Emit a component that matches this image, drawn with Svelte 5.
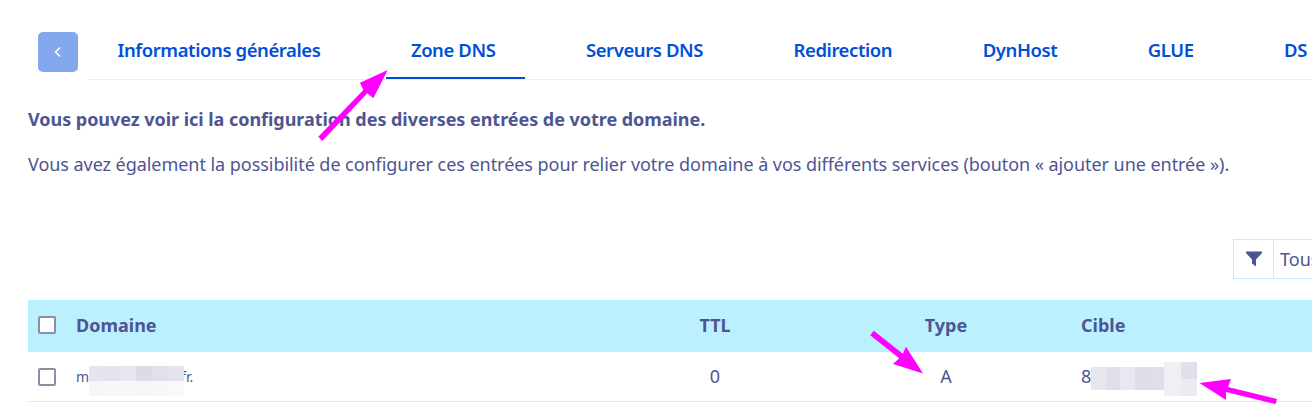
<script>
  const tabs = ['Informations générales', 'Zone DNS', 'Serveurs DNS', 'Redirection', 'DynHost', 'GLUE', 'DS'];
  const top1 = ['#e6e5ef', '#e3e2ed', '#e7e6f0', '#dcdce8', '#e1e0eb', '#e5e4ee'];
  const bottom1 = ['#f6f6f9', '#f8f8fb', '#f8f8fb', '#f6f6f9', '#f8f8fb', '#f9f9fb'];
  const cells2 = ['#e7e6ef', '#dfdfe9', '#e9e8f0', '#dedde8', '#e0dfe9'];
</script>

<main class="page">
  <header class="bar">
    <button class="back" aria-label="Retour">
      <svg width="10" height="12" viewBox="0 0 10 12"><path d="M7 1.500 2.600 6 7 10.500" fill="none" stroke="#fff" stroke-width="1.600"/></svg>
    </button>
    <ul class="tabs">
      {#each tabs as t, i}
        <li class="tab" class:active={i === 1}>{t}</li>
      {/each}
    </ul>
  </header>

  <section class="intro">
    <p class="lead">Vous pouvez voir ici la configuration des diverses entrées de votre domaine.</p>
    <p class="desc">Vous avez également la possibilité de configurer ces entrées pour relier votre domaine à vos différents services (bouton « ajouter une entrée »).</p>
  </section>

  <div class="filter">
    <span class="funnel">
      <svg width="16" height="16" viewBox="0 0 16 16"><path d="M0 .5H16V2L10 8.500V15.500L6 12.500V8.500L0 2z" fill="#4d5592"/></svg>
    </span>
    <span class="select">Tous</span>
  </div>

  <div class="table">
    <div class="row head">
      <span class="c-check"><i class="box"></i></span>
      <span class="c-domain">Domaine</span>
      <span class="c-ttl">TTL</span>
      <span class="c-type">Type</span>
      <span class="c-target">Cible</span>
    </div>
    <div class="row">
      <span class="c-check"><i class="box"></i></span>
      <span class="c-domain small">m<i class="gap"></i>fr.</span>
      <span class="c-ttl lift">0</span>
      <span class="c-type lift">A</span>
      <span class="c-target lift">8</span>
    </div>
  </div>

  <div class="redact r1">
    {#each top1 as c}<i style="background:{c}"></i>{/each}
    {#each bottom1 as c}<i style="background:{c}"></i>{/each}
  </div>
  <div class="redact r2">
    {#each cells2 as c}<i style="background:{c}"></i>{/each}
  </div>
  <div class="redact r3"><i></i><i></i><i></i></div>

  <svg class="arrows" width="1312" height="418" viewBox="0 0 1312 418" fill="#f0f">
    <path d="M318.300 136.700 363.300 90 360 82.700 387.700 70 373.300 98.300 367.300 93.300 322.300 141z"/>
    <path d="M873.800 330.800 902.800 353.800 906 346.700 923 373.500 893 364 899.200 358.200 870.200 335.200z"/>
    <path d="M1277 399 1275.500 404 1226 392 1226 400 1199.500 383 1231 379 1228 387z"/>
  </svg>
</main>

<style>
  :global(body) { margin: 0; background: #fff; }
  .page {
    position: relative;
    width: 1312px;
    height: 418px;
    overflow: hidden;
    padding: 32px 0 0 28px;
    box-sizing: border-box;
    font-family: "Noto Sans", sans-serif;
    color: #4d5592;
  }
  p { margin: 0; }
  .bar { display: flex; align-items: flex-start; padding-left: 10px; height: 48px; }
  .back {
    width: 40px; height: 40px; padding: 0; border: 0; border-radius: 5px;
    background: #84a8ed; display: flex; align-items: center; justify-content: center; flex: none;
  }
  .tabs {
    display: flex; list-style: none; margin: 0 0 0 10px; padding: 0 0 0 4.500px;
    border-bottom: 1px solid #e6eff7; flex: 1; height: 47px; box-sizing: content-box; white-space: nowrap;
  }
  .tab {
    box-sizing: border-box; height: 47px; padding: 5px 30px 0 25px; margin-right: 35.500px;
    font-size: 18.500px; font-weight: 600; line-height: 26px; color: #0050d7; letter-spacing: -0.420px;
  }
  .active { border-bottom: 2px solid #0050d7; height: 47px; }
  .intro { padding-top: 27px; }
  .lead { font-size: 18px; font-weight: 700; line-height: 24px; letter-spacing: -0.040px; white-space: nowrap; }
  .desc { margin-top: 21px; font-size: 18px; line-height: 24px; letter-spacing: -0.050px; white-space: nowrap; }
  .filter { display: flex; justify-content: flex-end; height: 40px; margin-top: 63px; box-sizing: border-box; }
  .funnel {
    box-sizing: border-box; width: 41px; height: 40px; border: 1px solid #bef1ff; display: flex;
    align-items: center; justify-content: center; margin-left: auto;
  }
  .select {
    box-sizing: border-box; width: 38px; height: 40px; padding-left: 6px; border: solid #bef1ff; border-width: 1px 0;
    font-size: 18px; line-height: 38px; overflow: hidden; white-space: nowrap;
  }
  .table { margin-top: 21px; }
  .row {
    display: grid; grid-template-columns: 48px 543px 192px 270px 1fr; align-items: center; height: 50px;
    border-bottom: 1px solid #d3eef6; font-size: 18px; box-sizing: border-box;
  }
  .head { height: 52px; padding-bottom: 2px; background: #bbf0ff; border: 0; font-weight: 700; }
  .lift { margin-bottom: 2px; }
  .box {
    display: block; width: 18px; height: 18px; box-sizing: border-box; margin-left: 10px;
    border: 2px solid #8d8da8; border-radius: 2px; background: #fff;
  }
  .c-ttl, .c-type { text-align: center; }
  .small { font-size: 14px; }
  .gap { display: inline-block; width: 92px; }
  .redact { position: absolute; display: grid; }
  .redact i { display: block; }
  .r1 { left: 89px; top: 366px; width: 95px; height: 30px; grid-template-columns: repeat(6, 1fr); grid-template-rows: 1fr 1fr; }
  .r2 { left: 1091px; top: 367px; width: 73px; height: 23px; grid-template-columns: repeat(5, 1fr); }
  .r3 { left: 1164px; top: 362px; width: 33px; height: 34px; grid-template-columns: 17px 16px; grid-template-rows: 17px 17px; }
  .r3 i:nth-child(1) { grid-row: span 2; background: #efeff4; }
  .r3 i:nth-child(2) { background: #e0e0ea; }
  .r3 i:nth-child(3) { background: #ebebf1; }
  .arrows { position: absolute; left: 0; top: 0; pointer-events: none; }
</style>
